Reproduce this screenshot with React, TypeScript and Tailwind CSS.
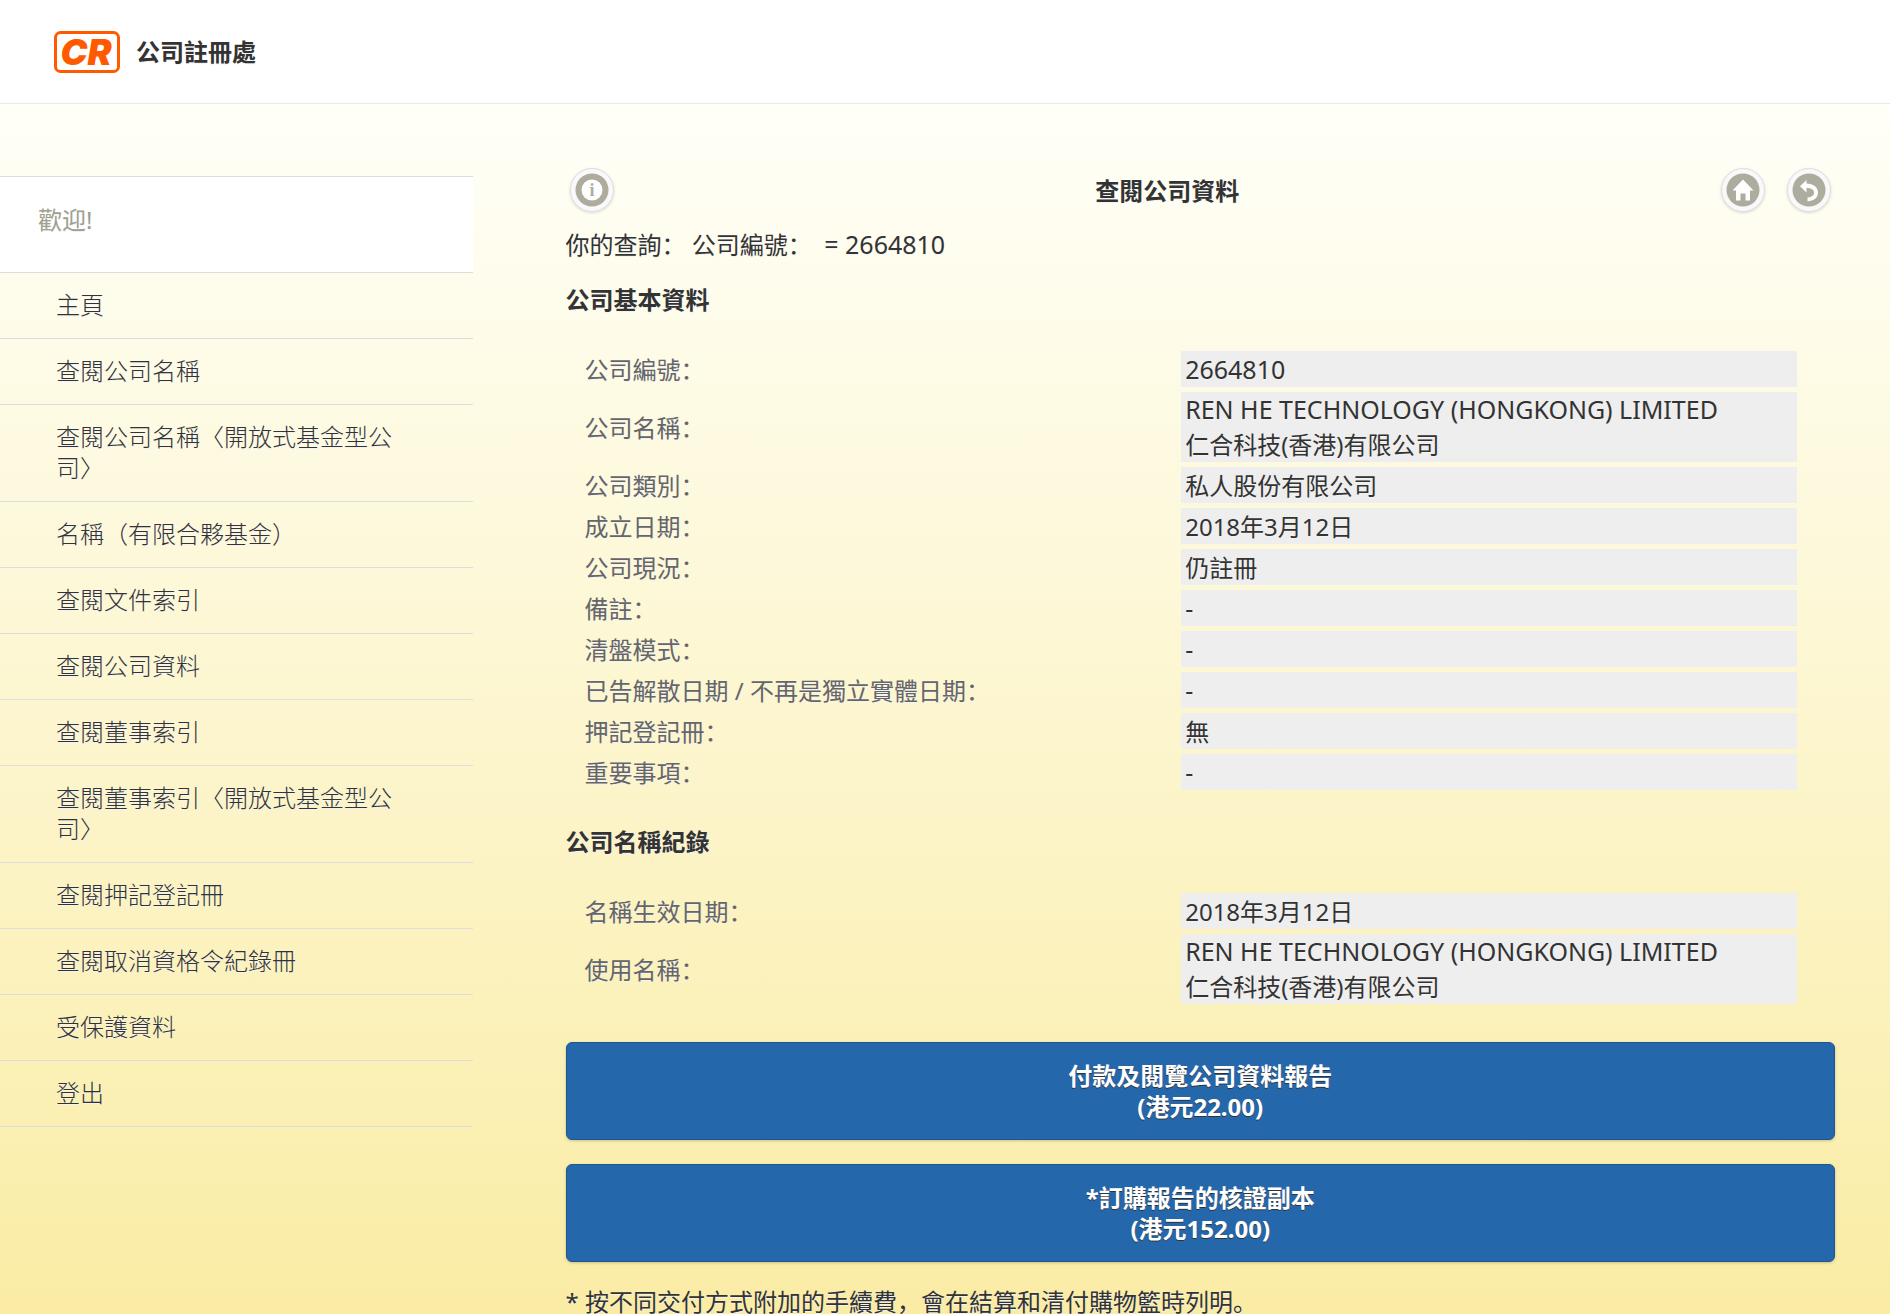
import type { ReactNode } from 'react';

const MENU = [
  '主頁',
  '查閱公司名稱',
  '查閱公司名稱〈開放式基金型公司〉',
  '名稱（有限合夥基金）',
  '查閱文件索引',
  '查閱公司資料',
  '查閱董事索引',
  '查閱董事索引〈開放式基金型公司〉',
  '查閱押記登記冊',
  '查閱取消資格令紀錄冊',
  '受保護資料',
  '登出',
];

type Row = { label: string; value: string[] };

const COMPANY_NAME = ['REN HE TECHNOLOGY (HONGKONG) LIMITED', '仁合科技(香港)有限公司'];

const PARTICULARS: Row[] = [
  { label: '公司編號：', value: ['2664810'] },
  { label: '公司名稱：', value: COMPANY_NAME },
  { label: '公司類別：', value: ['私人股份有限公司'] },
  { label: '成立日期：', value: ['2018年3月12日'] },
  { label: '公司現況：', value: ['仍註冊'] },
  { label: '備註：', value: ['-'] },
  { label: '清盤模式：', value: ['-'] },
  { label: '已告解散日期 / 不再是獨立實體日期：', value: ['-'] },
  { label: '押記登記冊：', value: ['無'] },
  { label: '重要事項：', value: ['-'] },
];

const NAME_HISTORY: Row[] = [
  { label: '名稱生效日期：', value: ['2018年3月12日'] },
  { label: '使用名稱：', value: COMPANY_NAME },
];

// Latin-only lines are set one pixel larger than the Chinese text
const isLatin = (line: string) => /^[\x20-\x7e]+$/.test(line);

export default function App() {
  return (
    <div
      lang="zh-Hans"
      className="min-h-screen flex flex-col bg-white font-['Noto_Sans','Noto_Sans_CJK_SC',sans-serif] text-2xl leading-[31px] text-[#333] [text-shadow:0_1px_0_#f3f3f3]"
    >
      <header className="flex items-center gap-4 h-[104px] pl-[54px] border-b border-[#eaeaea]">
        <Logo />
        <h1 className="font-bold">公司註冊處</h1>
      </header>

      <div className="flex-1 flex bg-linear-to-b from-[#fffff8] to-[#faeca4]">
        <nav className="w-1/4 shrink-0 pt-[72px]">
          <div className="h-[97px] pl-[38px] pt-[27px] bg-white border-y border-[#ddd] text-[#a09f90]">歡迎!</div>
          <ul>
            {MENU.map((item) => (
              <li key={item} className="border-b border-[#ddd]">
                <a
                  href="#"
                  className="block px-14 pt-[15px] pb-[19px] font-light font-['Noto_Sans_CJK_SC',sans-serif] break-all"
                >
                  {item}
                </a>
              </li>
            ))}
          </ul>
        </nav>

        <main className="flex-1 pl-[93px] pr-[55px] pt-16">
          <div className="flex items-center px-1">
            <IconButton label="資訊">
              <circle cx="22" cy="22" r="10.5" fill="#fff" />
              <text
                x="22"
                y="28"
                textAnchor="middle"
                fontSize="18"
                fontWeight="bold"
                fontFamily="Liberation Serif, serif"
                fill="#aeab9f"
              >
                i
              </text>
            </IconButton>
            <h2 className="flex-1 text-center font-bold">查閱公司資料</h2>
            <div className="flex gap-[22px]">
              <IconButton label="主頁">
                <path d="M22 11.5 L32.5 22.5 H29 V32.5 H24.5 V25.5 H19.5 V32.5 H15 V22.5 H11.5 Z" fill="#fff" />
              </IconButton>
              <IconButton label="返回">
                <path
                  d="M19.5 12 V15.5 C26 15.5 31 19 31 24.5 C31 29.5 27 33 20.5 33.2 V29.5 C25 29 27 27.5 27 24.5 C27 21.5 24.5 20 19.5 20 V24.5 L13 18.2 Z"
                  fill="#fff"
                />
              </IconButton>
            </div>
          </div>

          <p className="mt-[17px] whitespace-pre-wrap">
            你的查詢： 公司編號：  <span className="text-[25px]">= 2664810</span>
          </p>

          <h3 className="mt-6 font-bold">公司基本資料</h3>
          <DetailTable rows={PARTICULARS} />

          <h3 className="mt-[31px] font-bold">公司名稱紀錄</h3>
          <DetailTable rows={NAME_HISTORY} />

          <div className="flex flex-col gap-6 mt-[33px]">
            <ReportButton title="付款及閱覽公司資料報告" price="(港元22.00)" />
            <ReportButton title="*訂購報告的核證副本" price="(港元152.00)" />
          </div>

          <p className="mt-6">* 按不同交付方式附加的手續費，會在結算和清付購物籃時列明。</p>
        </main>
      </div>
    </div>
  );
}

function DetailTable({ rows }: { rows: Row[] }) {
  return (
    <div className="mt-[31px] pl-[14px] pr-[33px]">
      <table className="w-full table-fixed border-separate border-spacing-[5px] leading-[35px]">
        <tbody>
          {rows.map((row) => (
            <tr key={row.label}>
              <th scope="row" className="w-[49%] text-left font-normal text-[#666]">
                {row.label}
              </th>
              <td className="h-9 pl-1 bg-[#eee]">
                {row.value.map((line) => (
                  <div key={line} className={isLatin(line) ? 'text-[25px]' : ''}>
                    {line}
                  </div>
                ))}
              </td>
            </tr>
          ))}
        </tbody>
      </table>
    </div>
  );
}

function ReportButton({ title, price }: { title: string; price: string }) {
  return (
    <button
      type="button"
      className="w-full py-[17px] rounded-md border border-[#1f5591] bg-[#2567ab] text-white font-bold shadow-[0_1px_3px_rgba(0,0,0,0.2)] [text-shadow:0_1px_0_#333]"
    >
      <span className="block">{title}</span>
      <span className="block">{price}</span>
    </button>
  );
}

function IconButton({ label, children }: { label: string; children: ReactNode }) {
  return (
    <button
      type="button"
      aria-label={label}
      className="size-11 rounded-full bg-[#f9f9f9] shadow-[0_1px_3px_rgba(0,0,0,0.15)]"
    >
      <svg viewBox="0 0 44 44" className="size-11">
        <circle cx="22" cy="22" r="21.5" fill="none" stroke="#ddd" />
        <circle cx="22" cy="22" r="16.5" fill="#aeab9f" />
        {children}
      </svg>
    </button>
  );
}

function Logo() {
  return (
    <svg
      viewBox="0 0 66 42"
      className="w-[66px] h-[42px] overflow-visible [text-shadow:none]"
      role="img"
      aria-label="CR"
    >
      <rect x="1.5" y="1.5" width="63" height="39" rx="5" fill="#fff" stroke="#ff5a00" strokeWidth="3" />
      <text
        x="32"
        y="34"
        textAnchor="middle"
        fontSize="36"
        fontWeight="900"
        fontStyle="italic"
        fontFamily="Inter, sans-serif"
        fill="#ff5a00"
      >
        CR
      </text>
    </svg>
  );
}
